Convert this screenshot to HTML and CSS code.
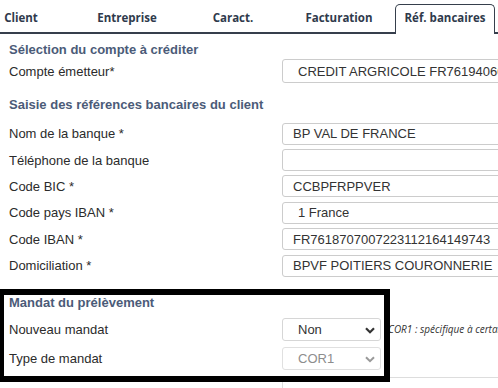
FILE: index.html
```html
<!DOCTYPE html>
<html lang="fr">
<head>
  <meta charset="UTF-8" />
  <meta name="viewport" content="width=device-width, initial-scale=1.0">
  <title>Références bancaires</title>
  <link rel="stylesheet" href="styles.css">
</head>
<body>
  <div class="page">
    <nav class="tabs">
      <div class="tab">Client</div>
      <div class="tab">Entreprise</div>
      <div class="tab">Caract.</div>
      <div class="tab">Facturation</div>
      <div class="tab active">Réf. bancaires</div>
    </nav>

    <section class="group">
      <h3 class="title first">Sélection du compte à créditer</h3>
      <div class="row tall">
        <label>Compte émetteur*</label>
        <div class="field sel wide">CREDIT ARGRICOLE FR76194060000123456789</div>
      </div>
    </section>

    <section class="group">
      <h3 class="title second">Saisie des références bancaires du client</h3>
      <div class="list">
        <div class="row"><label>Nom de la banque *</label><input class="field" value="BP VAL DE FRANCE"></div>
        <div class="row"><label>Téléphone de la banque</label><input class="field" value=""></div>
        <div class="row"><label>Code BIC *</label><input class="field" value="CCBPFRPPVER"></div>
        <div class="row"><label>Code pays IBAN *</label><div class="field sel">1 France</div></div>
        <div class="row"><label>Code IBAN *</label><input class="field" value="FR7618707007223112164149743"></div>
        <div class="row"><label>Domiciliation *</label><input class="field" value="BPVF POITIERS COURONNERIE"></div>
      </div>
    </section>

    <section class="group mandat">
      <h3 class="title third">Mandat du prélèvement</h3>
      <div class="list small">
        <div class="row m">
          <label>Nouveau mandat</label>
          <div class="cell">
            <div class="select">
              <span>Non</span>
              <svg class="chev" width="10" height="7" viewBox="0 0 10 7"><path d="M1 1.2 L5 5.2 L9 1.2" fill="none" stroke="#333" stroke-width="2.2"/></svg>
            </div>
            <span class="note">COR1 : spécifique à certains établissements</span>
          </div>
        </div>
        <div class="row m">
          <label>Type de mandat</label>
          <div class="cell">
            <div class="select off">
              <span>COR1</span>
              <svg class="chev" width="10" height="7" viewBox="0 0 10 7"><path d="M1 1.2 L5 5.2 L9 1.2" fill="none" stroke="#999" stroke-width="2"/></svg>
            </div>
          </div>
        </div>
        <div class="row m last">
          <label></label>
          <div class="field stub"></div>
        </div>
      </div>
      <div class="frame"></div>
    </section>
  </div>
</body>
</html>
```

FILE: styles.css
```css
:root {
  --ink: #333;
  --title: #4b5b78;
  --tabink: #2f3a4c;
  --line: #363f4c;
  --border: #ccc;
}

html, body {
  margin: 0;
  padding: 0;
  background: #fff;
}

body {
  font-family: "Liberation Sans", Arial, sans-serif;
  font-size: 13px;
  color: var(--ink);
}

.page {
  position: relative;
  width: 498px;
  height: 388px;
  overflow: hidden;
}

/* onglets */
.tabs {
  display: flex;
  gap: 6px;
  margin-left: -29px;
  height: 34px;
  box-sizing: border-box;
  border-bottom: 2px solid var(--line);
}

.tab {
  flex: 0 0 100px;
  align-self: flex-end;
  height: 30px;
  margin-bottom: -2px;
  box-sizing: border-box;
  padding-top: 3px;
  border: 1.5px solid transparent;
  border-bottom: 0;
  text-align: center;
  font-family: "Open Sans", sans-serif;
  font-weight: 700;
  font-size: 11.5px;
  line-height: 20px;
  color: var(--tabink);
}

.tab.active {
  border-color: var(--line);
  border-radius: 5px 5px 0 0;
  background: #fff;
}

/* formulaire */
.title {
  margin: 0;
  padding-left: 9px;
  font-size: 13px;
  line-height: 18px;
  font-weight: bold;
  color: var(--title);
}

.title.first { margin-top: 7px; }
.title.second { margin-top: 13px; }
.title.third { margin-top: 15px; }

.list {
  margin-top: 6.5px;
}

.list.small {
  margin-top: 3px;
}

.row {
  display: grid;
  grid-template-columns: 282px 260px;
  align-items: center;
  height: 26.4px;
}

.row.tall {
  height: 24px;
}

.row.m {
  height: 29px;
}

.row label {
  padding-left: 9px;
  color: #2b2b2b;
}

.field {
  box-sizing: border-box;
  width: 250px;
  height: 22px;
  margin: 0;
  padding: 0 10px;
  border: 1px solid var(--border);
  border-radius: 3px;
  font-family: "Liberation Sans", Arial, sans-serif;
  font-size: 13px;
  color: var(--ink);
  background: #fff;
  outline: none;
}

.field.sel {
  display: flex;
  align-items: center;
  padding-left: 15px;
  white-space: nowrap;
  overflow: hidden;
}

.field.wide {
  height: 24px;
  width: 260px;
}

.cell {
  display: flex;
  align-items: center;
  white-space: nowrap;
}

.select {
  position: relative;
  flex: 0 0 auto;
  box-sizing: border-box;
  width: 99px;
  height: 23px;
  padding-left: 15px;
  display: flex;
  align-items: center;
  border: 1px solid #d6d6d6;
  border-radius: 3px;
  background: #fff;
}

.select.off {
  color: #8d8d8d;
  border-color: #e0e0e0;
}

.chev {
  position: absolute;
  right: 5px;
  top: 8px;
}

.note {
  margin-left: 7px;
  font-family: "Open Sans", sans-serif;
  font-style: italic;
  font-size: 10px;
  color: #333;
}

.field.stub {
  align-self: start;
  margin-top: 4px;
  border-color: #ddd;
}

/* cadre d'annotation */
.mandat {
  position: relative;
}

.frame {
  position: absolute;
  top: -5px;
  left: -2px;
  width: 392px;
  height: 93px;
  box-sizing: border-box;
  border: 6px solid #000;
}
```
